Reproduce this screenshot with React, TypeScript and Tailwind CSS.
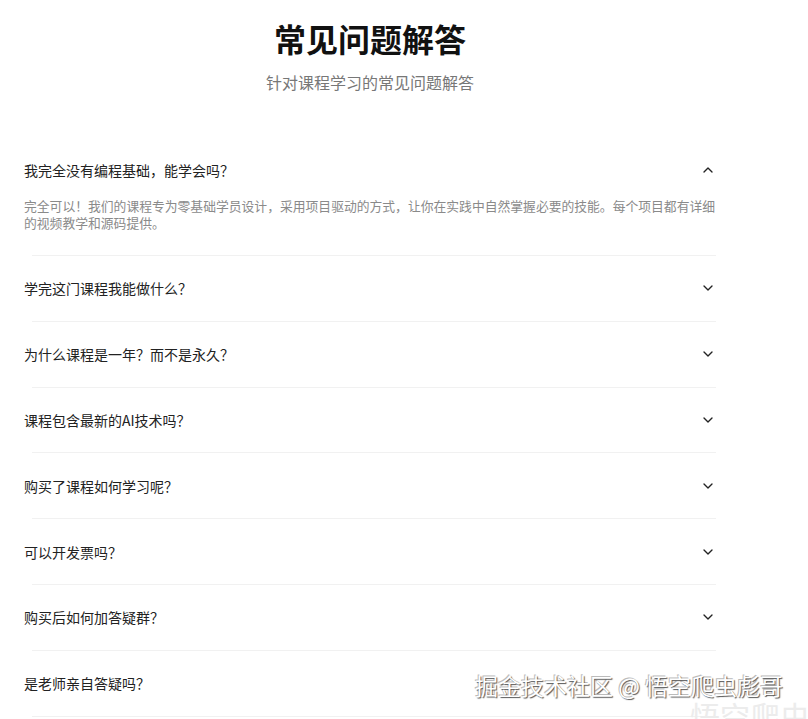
import { ChevronDown, ChevronUp } from "lucide-react";

type Faq = { q: string; a?: string };

const faqs: Faq[] = [
  {
    q: "我完全没有编程基础，能学会吗？",
    a: "完全可以！我们的课程专为零基础学员设计，采用项目驱动的方式，让你在实践中自然掌握必要的技能。每个项目都有详细的视频教学和源码提供。",
  },
  { q: "学完这门课程我能做什么？" },
  { q: "为什么课程是一年？而不是永久？" },
  { q: "课程包含最新的AI技术吗？" },
  { q: "购买了课程如何学习呢？" },
  { q: "可以开发票吗？" },
  { q: "购买后如何加答疑群？" },
  { q: "是老师亲自答疑吗？" },
];

function FaqItem({ item, open }: { item: Faq; open: boolean }) {
  return (
    <div>
      <button
        className={`flex w-full items-center justify-between text-left ${
          open ? "pt-5 pb-[15px]" : "h-[64.8px]"
        }`}
      >
        <span className="text-[14px] leading-6 text-[#222]">{item.q}</span>
        {open ? (
          <ChevronUp size={16} strokeWidth={2} className="text-[#222]" />
        ) : (
          <ChevronDown size={16} strokeWidth={2} className="text-[#222]" />
        )}
      </button>
      {open && item.a && (
        <p className="pb-6 text-[12.8px] leading-[17px] text-[#8a8a8a]">{item.a}</p>
      )}
      <div className="ml-2 h-px bg-[#f1f1f1]" />
    </div>
  );
}

export default function App() {
  return (
    <div
      className="relative min-h-[719px] overflow-hidden bg-white px-6"
      style={{ fontFamily: '"Noto Sans CJK SC", "Noto Sans", sans-serif' }}
    >
      <div className="w-[692px]">
        <header className="flex flex-col items-center pt-[18px]">
          <h1 className="text-[32px] font-bold leading-10 text-[#111]">常见问题解答</h1>
          <p className="mt-3 text-[16px] leading-6 text-[#777]">针对课程学习的常见问题解答</p>
        </header>

        <div className="mt-[44px] flex flex-col">
          {faqs.map((f, i) => (
            <FaqItem key={f.q} item={f} open={i === 0} />
          ))}
        </div>
      </div>

      {/* site watermark */}
      <div className="pointer-events-none absolute left-[475px] top-[669px] whitespace-nowrap text-[23px] leading-[32px] text-white [text-shadow:1px_1px_1px_#555,-1px_-1px_0_#bbb]">
        掘金技术社区 @ 悟空爬虫彪哥
      </div>
      <div className="pointer-events-none absolute left-[690px] top-[697px] whitespace-nowrap text-[30px] leading-[36px] text-[#ececec]">
        悟空爬虫
      </div>
    </div>
  );
}
